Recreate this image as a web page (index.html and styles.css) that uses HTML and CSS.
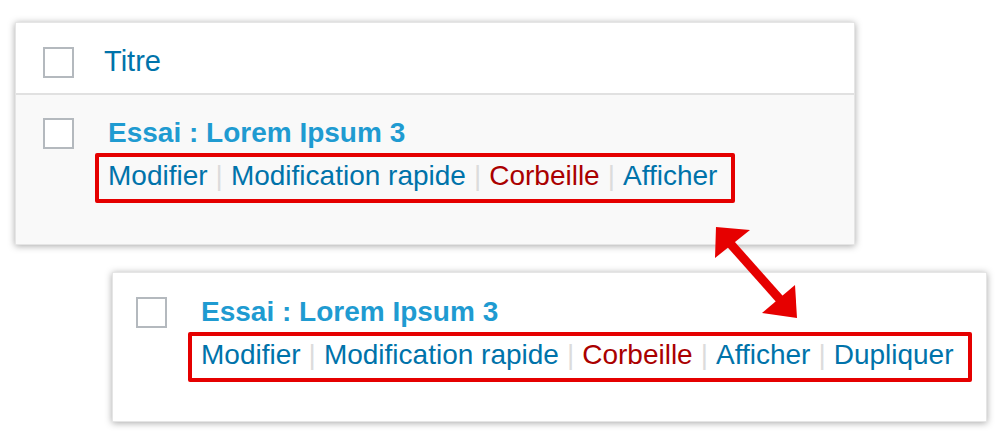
FILE: index.html
```html
<!DOCTYPE html>
<html lang="fr">
<head>
<meta charset="utf-8">
<title>Dupliquer</title>
<link rel="stylesheet" href="styles.css">
</head>
<body>
<div class="canvas">
  <div class="panel panel-top">
    <div class="thead">
      <span class="cb"></span>
      <span class="col-title">Titre</span>
    </div>
    <div class="trow">
      <span class="cb"></span>
      <div class="cell">
        <div class="post-title">Essai : Lorem Ipsum 3</div>
        <div class="actions">
          <span class="act">Modifier</span><span class="sep">|</span><span class="act">Modification rapide</span><span class="sep">|</span><span class="act trash">Corbeille</span><span class="sep">|</span><span class="act">Afficher</span>
        </div>
      </div>
    </div>
  </div>
  <div class="panel panel-bottom">
    <div class="trow white">
      <span class="cb"></span>
      <div class="cell">
        <div class="post-title">Essai : Lorem Ipsum 3</div>
        <div class="actions">
          <span class="act">Modifier</span><span class="sep">|</span><span class="act">Modification rapide</span><span class="sep">|</span><span class="act trash">Corbeille</span><span class="sep">|</span><span class="act">Afficher</span><span class="sep">|</span><span class="act">Dupliquer</span>
        </div>
      </div>
    </div>
  </div>
  <svg class="arrow" width="1000" height="440" viewBox="0 0 1000 440">
    <line x1="728" y1="241" x2="784" y2="304" stroke="#e60000" stroke-width="9"/>
    <polygon points="716,227 750,230 715,258" fill="#e60000"/>
    <polygon points="797,318 795,285 762,313" fill="#e60000"/>
  </svg>
</div>
</body>
</html>
```

FILE: styles.css
```css
* { box-sizing: border-box; }
html, body { margin: 0; padding: 0; background: #fff; }
body {
  font-family: "Liberation Sans", Arial, Helvetica, sans-serif;
  width: 1000px;
  height: 440px;
  overflow: hidden;
}
.canvas {
  position: relative;
  width: 1000px;
  height: 440px;
  padding-top: 22px;
}
.panel {
  background: #f9f9f9;
  border: 1px solid #e5e5e5;
  box-shadow: 0 1px 7px rgba(0, 0, 0, 0.35);
}
.panel-top {
  margin-left: 15px;
  width: 840px;
  height: 223px;
}
.panel-bottom {
  margin-left: 112px;
  margin-top: 27px;
  width: 875px;
  height: 150px;
  background: #fff;
}
.thead {
  height: 72px;
  display: flex;
  align-items: flex-start;
  background: #fff;
  border-bottom: 2px solid #e1e1e1;
  padding: 24px 0 0 27px;
}
.cb {
  display: block;
  width: 31px;
  height: 31px;
  border: 2px solid #b4b9be;
  background: #fff;
  flex: none;
}
.col-title {
  margin-left: 30px;
  margin-top: -1px;
  font-size: 29px;
  line-height: 31px;
  color: #0073aa;
}
.trow {
  display: flex;
  align-items: flex-start;
  padding: 23px 0 0 27px;
}
.trow.white { padding: 24px 0 0 23px; }
.cell {
  margin-left: 21px;
}
.post-title {
  font-size: 28px;
  font-weight: bold;
  color: #1f9bd1;
  line-height: 29px;
  padding-left: 13px;
}
.actions {
  margin-top: 6px;
  border: 4px solid #e50000;
  border-radius: 2px;
  padding: 2px 14px 6px 9px;
  font-size: 28px;
  line-height: 34px;
  white-space: nowrap;
  display: inline-block;
}
.act { color: #0073aa; }
.act.trash { color: #a00; }
.sep {
  color: #dcdcdc;
  padding: 0 8px;
}
.arrow {
  position: absolute;
  left: 0;
  top: 0;
  pointer-events: none;
}
```
